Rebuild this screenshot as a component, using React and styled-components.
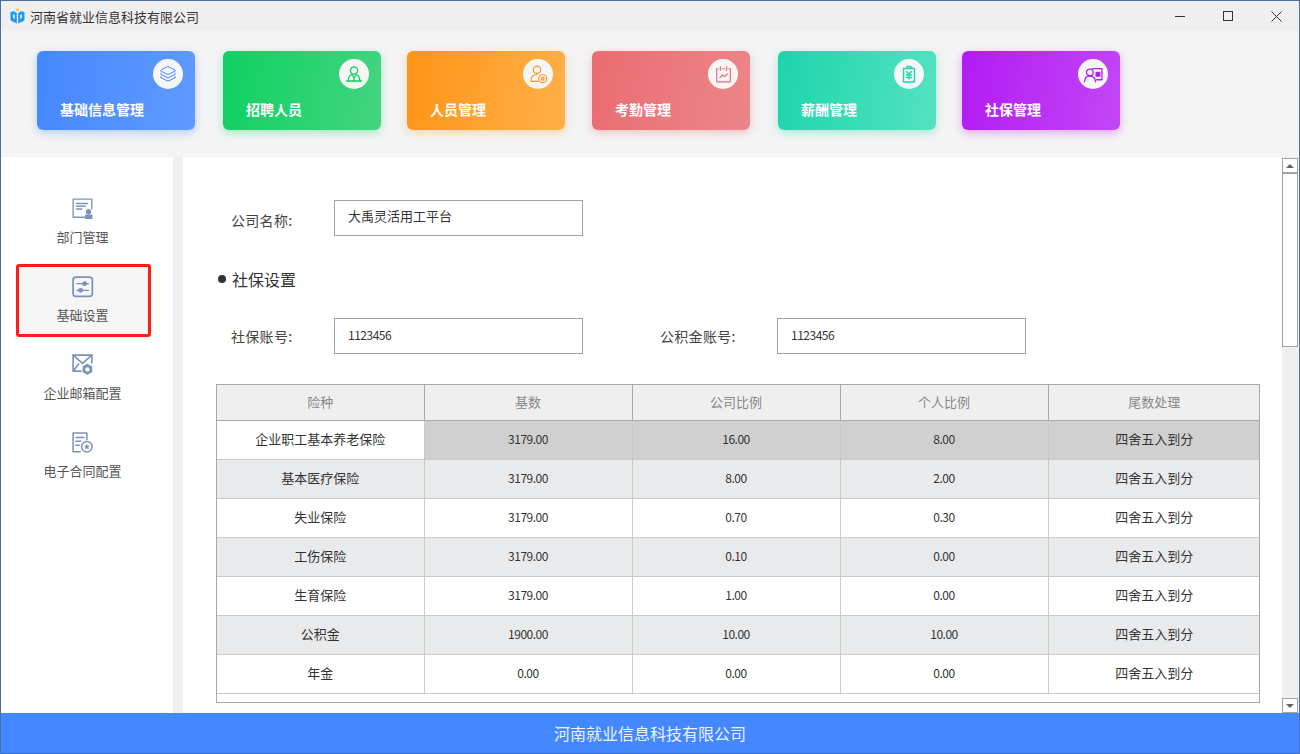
import styled, { createGlobalStyle } from 'styled-components'
import { useState } from 'react'

const Global = createGlobalStyle`
  html, body { margin: 0; padding: 0; height: 100%; overflow: hidden; }
  body { font-family: "Noto Sans CJK SC", "Noto Sans", sans-serif; }
  * { box-sizing: border-box; }
`

const Win = styled.div`
  width: 1300px;
  height: 754px;
  display: flex;
  flex-direction: column;
  border: 1px solid #4c6ea3;
  border-bottom-color: #3a6fd0;
  background: #fff;
`
const TitleBar = styled.div`
  height: 30px;
  flex: none;
  background: #efefef;
  display: flex;
  align-items: center;
  padding-left: 9px;
  font-size: 13px;
  color: #333;
`
const AppName = styled.span`
  margin-left: 5px;
`
const WinBtns = styled.div`
  margin-left: auto;
  margin-right: -1px;
  display: flex;
  height: 100%;
`
const WinBtn = styled.div`
  width: 48px;
  height: 100%;
  display: flex;
  align-items: center;
  justify-content: center;
  color: #333;
`
const TopNav = styled.div`
  height: 126px;
  flex: none;
  background: #f4f4f4;
  display: flex;
  padding: 20px 0 0 36px;
`
const Card = styled.div`
  position: relative;
  width: 158px;
  height: 79px;
  margin-left: ${p => p.$gap}px;
  border-radius: 6px;
  background: linear-gradient(100deg, ${p => p.$from}, ${p => p.$to});
  box-shadow: 0 3px 8px ${p => p.$shadow};
  color: #fff;
  font-size: 14px;
  font-weight: 700;
  padding: 48px 0 0 23px;
  line-height: 20px;
`
const CardIcon = styled.div`
  position: absolute;
  top: 8px;
  right: 12px;
  width: 30px;
  height: 30px;
  border-radius: 50%;
  background: #f6f6f6;
  display: flex;
  align-items: center;
  justify-content: center;
  color: ${p => p.$color};
`
const Body = styled.div`
  flex: 1;
  min-height: 0;
  display: flex;
`
const Side = styled.div`
  width: 172px;
  flex: none;
  background: #fff;
  padding: 29px 0 0 15px;
  display: flex;
  flex-direction: column;
  gap: 5px;
`
const SideItem = styled.div`
  width: 135px;
  height: 73px;
  display: flex;
  flex-direction: column;
  align-items: center;
  padding: 9px 2px 0 0;
  font-size: 13px;
  color: #555;
  border-radius: 3px;
  border: 3px solid ${p => p.$active ? '#fb1f14' : 'transparent'};
  background: ${p => p.$active ? '#f6f6f6' : 'transparent'};
`
const SideIcon = styled.span`
  height: 22px;
  color: #7d92bb;
`
const SideLabel = styled.span`
  margin-top: 7px;
  line-height: 20px;
`
const Gutter = styled.div`
  width: 10px;
  flex: none;
  background: #efefef;
`
const Main = styled.div`
  flex: 1;
  min-width: 0;
  padding: 43px 0 0 33px;
  overflow: hidden;
  background: #fff;
`
const FormRow = styled.div`
  display: flex;
  align-items: center;
  height: 36px;
`
const FieldLabel = styled.label`
  width: 118px;
  padding-left: 15px;
  padding-top: ${p => p.$low ? '4px' : '0'};
  font-size: 14px;
  letter-spacing: 0.3px;
  color: #444;
`
const SecondLabel = styled(FieldLabel)`
  width: 117px;
  margin-left: 77px;
  padding-left: 0;
`
const TextBox = styled.input`
  width: 249px;
  height: 36px;
  border: 1px solid #a3a3a3;
  background: #fff;
  padding: 0 13px ${p => p.$small ? '4px' : '6px'};
  font-family: "Noto Sans CJK SC", "Noto Sans", sans-serif;
  font-size: ${p => p.$small ? '12px' : '13px'};
  letter-spacing: ${p => p.$small ? '-0.5px' : '0'};
  color: #333;
  outline: none;
`
const SectionTitle = styled.div`
  margin: 29px 0 25px 2px;
  height: 28px;
  line-height: 28px;
  font-size: 16px;
  color: #333;
  display: flex;
  align-items: center;
  gap: 6px;
`
const Dot = styled.i`
  width: 8px;
  height: 8px;
  border-radius: 50%;
  background: #333;
`
const TableWrap = styled.div`
  width: 1044px;
  height: 319px;
  margin-top: 30px;
  border: 1px solid #a8a8a8;
  overflow: hidden;
`
const Table = styled.table`
  border-collapse: collapse;
  table-layout: fixed;
  width: 1043px;
  font-size: 13px;
  color: #333;
`
const Th = styled.th`
  height: 35px;
  background: #efefef;
  border: 1px solid #a8a8a8;
  border-top: 0;
  font-weight: 400;
  color: #888;
  padding: 0 0 2px;
  width: ${p => p.$w}px;
  &:first-child { border-left: 0; }
  &:last-child { border-right: 0; }
`
const Td = styled.td`
  height: 39px;
  padding: 0 0 2px;
  text-align: center;
  border: 1px solid #cacaca;
  background: ${p => p.$bg};
  font-size: ${p => p.$num ? '12px' : '13px'};
  letter-spacing: ${p => p.$num ? '-0.5px' : '0'};
  &:first-child { border-left: 0; }
  &:last-child { border-right: 0; }
`
const ScrollBar = styled.div`
  width: 17px;
  flex: none;
  background: #efefef;
  display: flex;
  flex-direction: column;
  padding: 1px 1px 0 0;
`
const ScrollBtn = styled.div`
  height: 15px;
  flex: none;
  background: #fff;
  border: 1px solid #a3a3a3;
  display: flex;
  align-items: center;
  justify-content: center;
`
const Thumb = styled.div`
  height: 174px;
  flex: none;
  background: #fff;
  border: 1px solid #a3a3a3;
`
const Spacer = styled.div`
  flex: 1;
`
const Arrow = styled.i`
  width: 0;
  height: 0;
  border-left: 4px solid transparent;
  border-right: 4px solid transparent;
  ${p => p.$down ? 'border-top: 4px solid #666;' : 'border-bottom: 4px solid #666;'}
`
const Footer = styled.div`
  height: 40px;
  flex: none;
  background: #4488ff;
  color: #eef4ff;
  font-size: 16px;
  display: flex;
  align-items: center;
  justify-content: center;
`

const Ico = ({ children, size = 20, sw = 1.2 }) => (
  <svg width={size} height={size} viewBox="0 0 20 20" fill="none" stroke="currentColor" strokeWidth={sw} strokeLinejoin="round" strokeLinecap="round">
    {children}
  </svg>
)

const Logo = () => (
  <svg width="15" height="16" viewBox="0 0 15 16">
    <circle cx="7.5" cy="1.8" r="1.6" fill="#ffc93c" />
    <path d="M0.5 4 L4 3.2 L6.8 5 V15.5 L1.5 13 Q0.5 12.5 0.5 11 Z" fill="#1e9bf0" />
    <path d="M14.5 4 L11 3.2 L8.2 5 V15.5 L13.5 13 Q14.5 12.5 14.5 11 Z" fill="#1e9bf0" />
    <path d="M3 6 L5 7 V11 L3 10 Z M12 6 L10 7 V11 L12 10 Z" fill="#bfe6ff" />
  </svg>
)

const cards = [
  { name: '基础信息管理', gap: 0, from: '#4488ff', to: '#5f9aff', shadow: 'rgba(68,136,255,.35)', icon: (
    <Ico size={20} sw={1}><path d="M10 2.5 L17 6 Q17.6 6.6 17 7.2 L10 10.5 L3 7.2 Q2.4 6.6 3 6 Z" /><path d="M3 9 Q2.4 9.8 3 10.4 L10 13.8 L17 10.4 Q17.6 9.8 17 9" /><path d="M3 12.4 Q2.4 13.2 3 13.8 L10 17.2 L17 13.8 Q17.6 13.2 17 12.4" /></Ico>
  ) },
  { name: '招聘人员', gap: 28, from: '#0ed160', to: '#44d481', shadow: 'rgba(14,209,96,.35)', icon: (
    <Ico size={20} sw={1.3}><circle cx="10" cy="6.5" r="3.6" /><path d="M2.5 17 H17.5 M4 17 Q4.5 11.5 8 10.5 L10 14 L12 10.5 Q15.5 11.5 16 17" /><path d="M10 14 V17" /></Ico>
  ) },
  { name: '人员管理', gap: 26, from: '#ff9417', to: '#ffb048', shadow: 'rgba(255,148,23,.3)', icon: (
    <Ico size={21} sw={1.1}><circle cx="8.5" cy="5.5" r="3.5" /><path d="M3 16.5 Q2.5 10.5 8.5 10 M3 16.5 H9.5" /><circle cx="14" cy="14" r="3.8" /><circle cx="14" cy="14" r="1.3" /></Ico>
  ) },
  { name: '考勤管理', gap: 27, from: '#ea6c72', to: '#ec8689', shadow: 'rgba(234,108,114,.35)', icon: (
    <Ico size={21} sw={1.1}><path d="M5 4.5 H3.5 V17 H16.5 V4.5 H15" /><path d="M7 2.5 V6 M13 2.5 V6 M9 4.5 H11" /><path d="M6.5 13 L9 10.5 L11 12 L13.5 9.5" /></Ico>
  ) },
  { name: '薪酬管理', gap: 28, from: '#1cd5ad', to: '#54e2c2', shadow: 'rgba(28,213,173,.35)', icon: (
    <Ico size={20} sw={1.4}><path d="M4.5 4.5 H15.5 V18 H4.5 Z" /><path d="M8 4.5 V2.5 H12 V4.5" /><path d="M7.5 7.5 L10 10 L12.5 7.5 M10 10 V15 M7.5 11 H12.5 M7.5 13.5 H12.5" /></Ico>
  ) },
  { name: '社保管理', gap: 26, from: '#b21bf2', to: '#c247f7', shadow: 'rgba(178,27,242,.35)', icon: (
    <Ico size={21} sw={1.2}><circle cx="6.5" cy="8" r="3.2" /><path d="M1.5 17 Q1.5 11.5 6.5 11.5 Q11.5 11.5 12 17" /><path d="M9 4.5 H18 V15 H13" /><path d="M12.5 8 H16 V11.5 H12.5 Z" fill="currentColor" /></Ico>
  ) },
]

const sideItems = [
  { name: '部门管理', icon: (
    <Ico size={22} sw={1.2}><path d="M12 17.5 H1 V1 H18 V10" /><path d="M4 5 H14 M4 7.5 H12 M4 10 H9" /><circle cx="15" cy="12.5" r="1.8" fill="currentColor" /><path d="M12.5 18.5 V15.5 H18 V18.5 Z" fill="currentColor" /></Ico>
  ) },
  { name: '基础设置', active: true, icon: (
    <Ico size={22} sw={1.6}><rect x="1" y="1" width="17.5" height="17.5" rx="2.5" /><path d="M4.5 7 H15 M4.5 13 H15" strokeWidth="1.1" /><circle cx="11.5" cy="7" r="1.4" fill="currentColor" /><circle cx="7.8" cy="13" r="1.4" fill="currentColor" /></Ico>
  ) },
  { name: '企业邮箱配置', icon: (
    <Ico size={22} sw={1.5}><path d="M9 15.5 H1 V1 H18 V8" /><path d="M1 1 L9.5 8.5 L18 1 M1.5 15 L6 9" /><path d="M14 8.6 L18.8 11.3 V16.7 L14 19.4 L9.2 16.7 V11.3 Z" fill="currentColor" stroke="#fff" strokeWidth="0.8" /><circle cx="14" cy="14" r="2" fill="#fff" stroke="none" /></Ico>
  ) },
  { name: '电子合同配置', icon: (
    <Ico size={22} sw={1.4}><path d="M7.5 18 H1 V1 H13.5 V7" /><path d="M3.5 5 H11 M3.5 8.5 H8 M3.5 12 H6.5" /><circle cx="13.5" cy="13.4" r="4.8" /><path d="M13.5 10.7 L14.3 12.4 L16.2 12.6 L14.8 13.9 L15.2 15.8 L13.5 14.8 L11.8 15.8 L12.2 13.9 L10.8 12.6 L12.7 12.4 Z" fill="currentColor" stroke="none" /></Ico>
  ) },
]

const headers = [
  { name: '险种', w: 207 },
  { name: '基数', w: 208 },
  { name: '公司比例', w: 208 },
  { name: '个人比例', w: 208 },
  { name: '尾数处理', w: 212 },
]

const rows = [
  ['企业职工基本养老保险', '3179.00', '16.00', '8.00'],
  ['基本医疗保险', '3179.00', '8.00', '2.00'],
  ['失业保险', '3179.00', '0.70', '0.30'],
  ['工伤保险', '3179.00', '0.10', '0.00'],
  ['生育保险', '3179.00', '1.00', '0.00'],
  ['公积金', '1900.00', '10.00', '10.00'],
  ['年金', '0.00', '0.00', '0.00'],
]

function rowBg(i, col) {
  if (i === 0) return col === 0 ? '#fff' : '#d0d0d0'
  return i % 2 === 1 ? '#e9eaec' : '#fff'
}

export default function App() {
  const [company, setCompany] = useState('大禹灵活用工平台')
  const [social, setSocial] = useState('1123456')
  const [fund, setFund] = useState('1123456')
  return (
    <Win>
      <Global />
      <TitleBar>
        <Logo />
        <AppName>河南省就业信息科技有限公司</AppName>
        <WinBtns>
          <WinBtn><svg width="10" height="10" viewBox="0 0 10 10" stroke="currentColor"><path d="M0 5.5 H10" /></svg></WinBtn>
          <WinBtn><svg width="10" height="10" viewBox="0 0 10 10" fill="none" stroke="currentColor"><rect x=".5" y=".5" width="9" height="9" /></svg></WinBtn>
          <WinBtn><svg width="11" height="11" viewBox="0 0 11 11" stroke="currentColor"><path d="M.5 .5 L10.5 10.5 M10.5 .5 L.5 10.5" /></svg></WinBtn>
        </WinBtns>
      </TitleBar>
      <TopNav>
        {cards.map(c => (
          <Card key={c.name} $gap={c.gap} $from={c.from} $to={c.to} $shadow={c.shadow}>
            {c.name}
            <CardIcon $color={c.from}>{c.icon}</CardIcon>
          </Card>
        ))}
      </TopNav>
      <Body>
        <Side>
          {sideItems.map(s => (
            <SideItem key={s.name} $active={s.active}>
              <SideIcon>{s.icon}</SideIcon>
              <SideLabel>{s.name}</SideLabel>
            </SideItem>
          ))}
        </Side>
        <Gutter />
        <Main>
          <FormRow>
            <FieldLabel $low>公司名称:</FieldLabel>
            <TextBox value={company} onChange={e => setCompany(e.target.value)} />
          </FormRow>
          <SectionTitle><Dot />社保设置</SectionTitle>
          <FormRow>
            <FieldLabel>社保账号:</FieldLabel>
            <TextBox $small value={social} onChange={e => setSocial(e.target.value)} />
            <SecondLabel>公积金账号:</SecondLabel>
            <TextBox $small value={fund} onChange={e => setFund(e.target.value)} />
          </FormRow>
          <TableWrap>
            <Table>
              <thead>
                <tr>
                  {headers.map(h => <Th key={h.name} $w={h.w}>{h.name}</Th>)}
                </tr>
              </thead>
              <tbody>
                {rows.map((r, i) => (
                  <tr key={r[0]}>
                    {r.map((v, j) => <Td key={j} $num={j > 0} $bg={rowBg(i, j)}>{v}</Td>)}
                    <Td $bg={rowBg(i, 4)}>四舍五入到分</Td>
                  </tr>
                ))}
              </tbody>
            </Table>
          </TableWrap>
        </Main>
        <ScrollBar>
          <ScrollBtn><Arrow /></ScrollBtn>
          <Thumb />
          <Spacer />
          <ScrollBtn><Arrow $down /></ScrollBtn>
        </ScrollBar>
      </Body>
      <Footer>河南就业信息科技有限公司</Footer>
    </Win>
  )
}
